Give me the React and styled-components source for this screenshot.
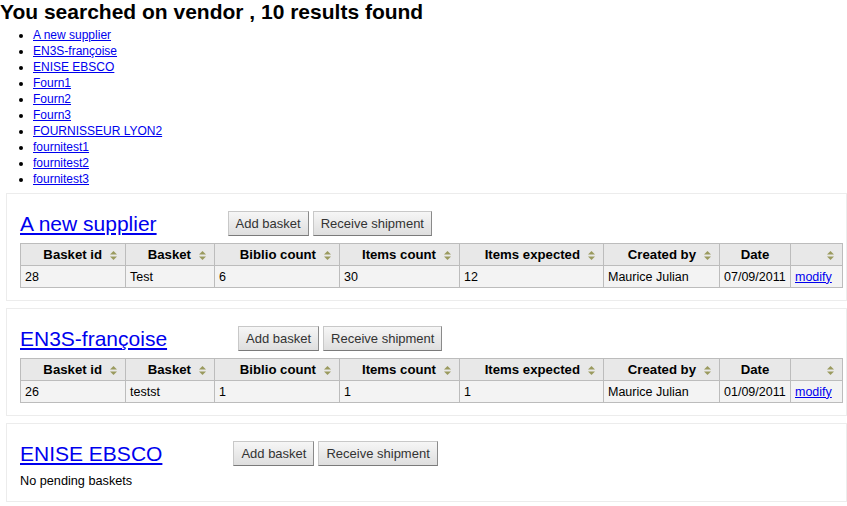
import styled, { createGlobalStyle } from "styled-components";

const GlobalStyle = createGlobalStyle`
  body {
    margin: 0;
    background: #fff;
    font-family: "Liberation Sans", Arial, sans-serif;
    color: #000;
  }
`;

const vendors = [
  "A new supplier",
  "EN3S-françoise",
  "ENISE EBSCO",
  "Fourn1",
  "Fourn2",
  "Fourn3",
  "FOURNISSEUR LYON2",
  "fournitest1",
  "fournitest2",
  "fournitest3",
];

const suppliers = [
  {
    name: "A new supplier",
    baskets: [
      { id: "28", name: "Test", biblio: "6", items: "30", expected: "12", by: "Maurice Julian", date: "07/09/2011" },
    ],
  },
  {
    name: "EN3S-françoise",
    baskets: [
      { id: "26", name: "testst", biblio: "1", items: "1", expected: "1", by: "Maurice Julian", date: "01/09/2011" },
    ],
  },
  { name: "ENISE EBSCO", baskets: [] },
];

const columns = [
  { label: "Basket id", width: 105, sort: true },
  { label: "Basket", width: 89, sort: true },
  { label: "Biblio count", width: 125, sort: true },
  { label: "Items count", width: 120, sort: true },
  { label: "Items expected", width: 144, sort: true },
  { label: "Created by", width: 116, sort: true },
  { label: "Date", width: 71, sort: false },
  { label: "", width: 52, sort: true },
];

function SortIcon() {
  return (
    <SortSvg width="7" height="9" viewBox="0 0 7 9">
      <path d="M3.5 0 L7 3.5 L0 3.5 Z" fill="#9a9a5e" />
      <path d="M0 5.5 L7 5.5 L3.5 9 Z" fill="#9a9a5e" />
    </SortSvg>
  );
}

function SupplierBox({ supplier }) {
  return (
    <Box>
      <BoxHeader>
        <SupplierName href="#">{supplier.name}</SupplierName>
        <Buttons>
          <Button>Add basket</Button>
          <Button>Receive shipment</Button>
        </Buttons>
      </BoxHeader>
      {supplier.baskets.length ? (
        <Table>
          <colgroup>
            {columns.map((c, i) => (
              <col key={i} style={{ width: c.width }} />
            ))}
          </colgroup>
          <thead>
            <tr>
              {columns.map((c, i) => (
                <Th key={i} $center={!c.sort}>
                  {c.label}
                  {c.sort && <SortIcon />}
                </Th>
              ))}
            </tr>
          </thead>
          <tbody>
            {supplier.baskets.map((b) => (
              <tr key={b.id}>
                <Td>{b.id}</Td>
                <Td>{b.name}</Td>
                <Td>{b.biblio}</Td>
                <Td>{b.items}</Td>
                <Td>{b.expected}</Td>
                <Td>{b.by}</Td>
                <Td>{b.date}</Td>
                <Td>
                  <Link href="#">modify</Link>
                </Td>
              </tr>
            ))}
          </tbody>
        </Table>
      ) : (
        <Empty>No pending baskets</Empty>
      )}
    </Box>
  );
}

export default function App() {
  return (
    <>
      <GlobalStyle />
      <Title>You searched on vendor , 10 results found</Title>
      <VendorList>
        {vendors.map((v) => (
          <li key={v}>
            <Link href="#">{v}</Link>
          </li>
        ))}
      </VendorList>
      {suppliers.map((s) => (
        <SupplierBox key={s.name} supplier={s} />
      ))}
    </>
  );
}

const Title = styled.h1`
  margin: 0;
  font-size: 21px;
  line-height: 24px;
  font-weight: bold;
`;

const VendorList = styled.ul`
  margin: 3px 0 6px;
  padding-left: 33px;
  font-size: 12px;
  line-height: 16px;
`;

const Link = styled.a`
  color: #0000ee;
  text-decoration: underline;
`;

const Box = styled.div`
  margin: 0 0 7px 6px;
  width: 841px;
  box-sizing: border-box;
  border: 1px solid #ececec;
  padding: 17px 4px 12px 13px;
`;

const BoxHeader = styled.div`
  display: flex;
  align-items: center;
  gap: 71px;
  margin-bottom: 7px;
`;

const SupplierName = styled.a`
  font-size: 21px;
  line-height: 24px;
  color: #0000ee;
  text-decoration: underline;
`;

const Buttons = styled.div`
  display: flex;
  gap: 4px;
`;

const Button = styled.button`
  font-family: "Liberation Sans", Arial, sans-serif;
  font-size: 13px;
  color: #333;
  height: 25px;
  padding: 0 7px;
  background: linear-gradient(#f6f6f6, #dedede);
  border: 1px solid;
  border-color: #c8c8c8 #8a8a8a #7a7a7a #c8c8c8;
  border-radius: 0;
`;

const Table = styled.table`
  border-collapse: collapse;
  table-layout: fixed;
  width: 822px;
  font-size: 12.5px;
`;

const Th = styled.th`
  background: #e8e8e8;
  border: 1px solid #bcbcbc;
  height: 21px;
  padding: 0 ${(p) => (p.$center ? "0" : "8px")} 0 0;
  text-align: ${(p) => (p.$center ? "center" : "right")};
  font-size: 13.2px;
  font-weight: bold;
  white-space: nowrap;
`;

const SortSvg = styled.svg`
  margin-left: 8px;
  vertical-align: -1px;
`;

const Td = styled.td`
  background: #f3f3f3;
  border: 1px solid #bcbcbc;
  height: 21px;
  padding: 0 4px;
  white-space: nowrap;
`;

const Empty = styled.p`
  margin: 0;
  font-size: 12.7px;
  line-height: 16px;
`;
